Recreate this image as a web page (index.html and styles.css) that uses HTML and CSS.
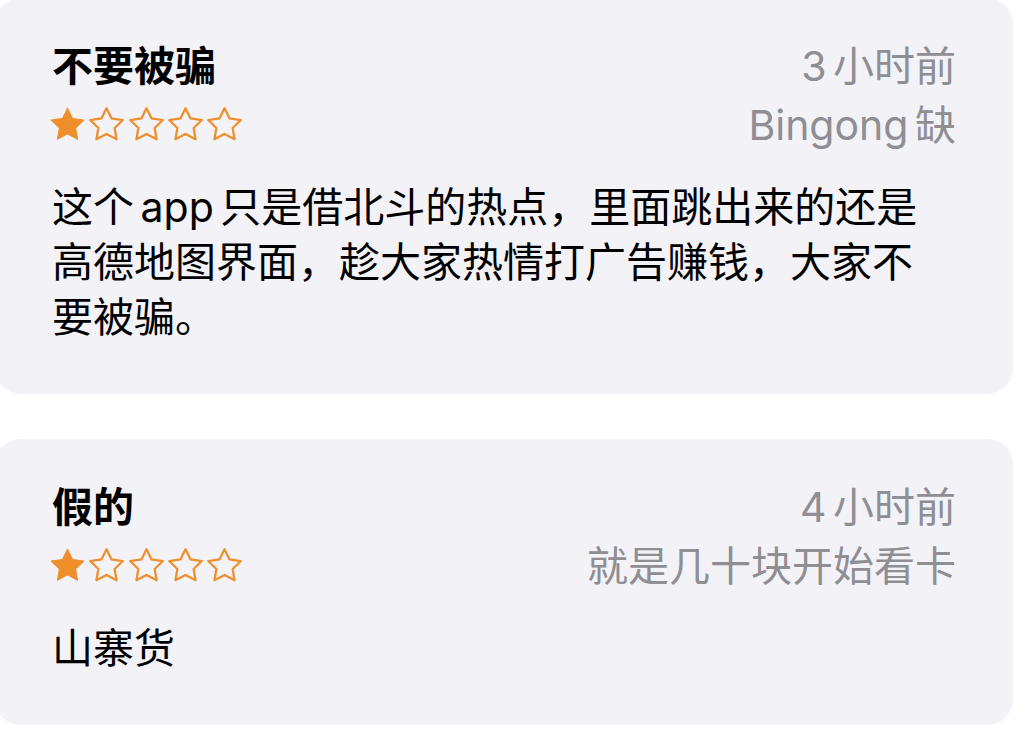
FILE: index.html
```html
<!DOCTYPE html>
<html lang="zh-CN">
<head>
<meta charset="utf-8">
<title>评论</title>
<link rel="stylesheet" href="styles.css">
</head>
<body>
<div class="reviews">
  <article class="review">
    <header class="review-head">
      <div class="review-main">
        <h2 class="review-title">不要被骗</h2>
        <div class="stars" aria-label="1 星">
          <svg class="star filled" viewBox="1.8 1.8 20.4 19.6"><polygon points="12,2.5 14.94,8.46 21.5,9.41 16.75,14.04 17.87,20.58 12,17.49 6.13,20.58 7.25,14.04 2.5,9.41 9.06,8.46"/></svg>
          <svg class="star" viewBox="1.8 1.8 20.4 19.6"><polygon points="12,2.5 14.94,8.46 21.5,9.41 16.75,14.04 17.87,20.58 12,17.49 6.13,20.58 7.25,14.04 2.5,9.41 9.06,8.46"/></svg>
          <svg class="star" viewBox="1.8 1.8 20.4 19.6"><polygon points="12,2.5 14.94,8.46 21.5,9.41 16.75,14.04 17.87,20.58 12,17.49 6.13,20.58 7.25,14.04 2.5,9.41 9.06,8.46"/></svg>
          <svg class="star" viewBox="1.8 1.8 20.4 19.6"><polygon points="12,2.5 14.94,8.46 21.5,9.41 16.75,14.04 17.87,20.58 12,17.49 6.13,20.58 7.25,14.04 2.5,9.41 9.06,8.46"/></svg>
          <svg class="star" viewBox="1.8 1.8 20.4 19.6"><polygon points="12,2.5 14.94,8.46 21.5,9.41 16.75,14.04 17.87,20.58 12,17.49 6.13,20.58 7.25,14.04 2.5,9.41 9.06,8.46"/></svg>
        </div>
      </div>
      <div class="review-meta">
        <div class="meta-line">3 小时前</div>
        <div class="meta-line author">Bingong 缺</div>
      </div>
    </header>
    <p class="review-body">这个 app 只是借北斗的热点，里面跳出来的还是高德地图界面，趁大家热情打广告赚钱，大家不要被骗。</p>
  </article>

  <article class="review">
    <header class="review-head">
      <div class="review-main">
        <h2 class="review-title">假的</h2>
        <div class="stars" aria-label="1 星">
          <svg class="star filled" viewBox="1.8 1.8 20.4 19.6"><polygon points="12,2.5 14.94,8.46 21.5,9.41 16.75,14.04 17.87,20.58 12,17.49 6.13,20.58 7.25,14.04 2.5,9.41 9.06,8.46"/></svg>
          <svg class="star" viewBox="1.8 1.8 20.4 19.6"><polygon points="12,2.5 14.94,8.46 21.5,9.41 16.75,14.04 17.87,20.58 12,17.49 6.13,20.58 7.25,14.04 2.5,9.41 9.06,8.46"/></svg>
          <svg class="star" viewBox="1.8 1.8 20.4 19.6"><polygon points="12,2.5 14.94,8.46 21.5,9.41 16.75,14.04 17.87,20.58 12,17.49 6.13,20.58 7.25,14.04 2.5,9.41 9.06,8.46"/></svg>
          <svg class="star" viewBox="1.8 1.8 20.4 19.6"><polygon points="12,2.5 14.94,8.46 21.5,9.41 16.75,14.04 17.87,20.58 12,17.49 6.13,20.58 7.25,14.04 2.5,9.41 9.06,8.46"/></svg>
          <svg class="star" viewBox="1.8 1.8 20.4 19.6"><polygon points="12,2.5 14.94,8.46 21.5,9.41 16.75,14.04 17.87,20.58 12,17.49 6.13,20.58 7.25,14.04 2.5,9.41 9.06,8.46"/></svg>
        </div>
      </div>
      <div class="review-meta">
        <div class="meta-line">4 小时前</div>
        <div class="meta-line author">就是几十块开始看卡</div>
      </div>
    </header>
    <p class="review-body">山寨货</p>
  </article>
</div>
</body>
</html>
```

FILE: styles.css
```css
html, body {
  margin: 0;
  padding: 0;
  background: #ffffff;
}

body {
  font-family: Inter, "Noto Sans CJK SC", sans-serif;
  color: #000000;
  word-spacing: -5px;
}

.reviews {
  display: flex;
  flex-direction: column;
  gap: 45px;
  margin: -2px 21px 0 -5px;
}

.review {
  background: #f2f2f7;
  border-radius: 26px;
  padding: 43px 57px 49px 57px;
}

.review-head {
  display: flex;
  justify-content: space-between;
  align-items: flex-start;
}

.review-main {
  display: flex;
  flex-direction: column;
}

.review-title {
  margin: 0;
  font-size: 41px;
  line-height: 50px;
  font-weight: 600;
}

.stars {
  display: flex;
  gap: 4.3px;
  margin-top: 16px;
  margin-left: -2px;
}

.star {
  width: 35px;
  height: 33.6px;
  display: block;
}

.star polygon {
  fill: none;
  stroke: #ef8f2c;
  stroke-width: 1.3;
  stroke-linejoin: round;
}

.star.filled polygon {
  fill: #ef8f2c;
  stroke-width: 0.6;
}

.review-meta {
  display: flex;
  flex-direction: column;
  align-items: flex-end;
  gap: 9px;
  color: #8e8e93;
  font-size: 41px;
  line-height: 50px;
}

.meta-line {
  white-space: nowrap;
}

.review-body {
  margin: 30px 0 0 0;
  max-width: 895px;
  font-size: 41px;
  line-height: 55px;
}
```
